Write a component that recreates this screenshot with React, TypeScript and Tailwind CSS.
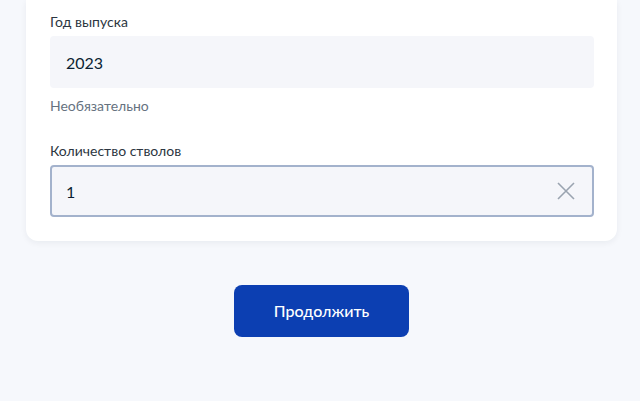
import React, { useState } from 'react';

const font = { fontFamily: 'Lato, "Noto Sans", sans-serif' };

const App: React.FC = () => {
    const [year, setYear] = useState('2023');
    const [barrels, setBarrels] = useState('1');

    return (
        <div className="min-h-[401px] bg-[#f6f8fc] pl-[26px] pr-[23px] pb-16 text-[#0b1f33]" style={font}>
            {/* form card, its top is scrolled away */}
            <div className="rounded-b-xl bg-white pl-6 pr-[23px] pt-3 pb-6 shadow-[0_2px_6px_rgba(11,31,51,0.06)]">
                <label className="block text-sm leading-5 text-[#2c3641]">Год выпуска</label>
                <input
                    value={year}
                    onChange={(e) => setYear(e.target.value)}
                    className="mt-1 block h-[52px] w-full rounded bg-[#f5f6fa] px-4 text-base text-[#0b1f33] outline-none"
                />
                <div className="mt-2 text-sm leading-5 text-[#66727f]">Необязательно</div>

                <label className="mt-[25px] block text-sm leading-5 text-[#2c3641]">Количество стволов</label>
                <div className="relative mt-1">
                    <input
                        value={barrels}
                        onChange={(e) => setBarrels(e.target.value)}
                        className="block h-[52px] w-full rounded border-2 border-[#a3b2cc] bg-[#f5f6fa] px-[14px] text-base text-[#0b1f33] outline-none"
                    />
                    <button
                        onClick={() => setBarrels('')}
                        className="absolute right-[18px] top-1/2 -translate-y-1/2 text-[#9aa4b0]"
                    >
                        <svg width="20" height="20" viewBox="0 0 20 20" fill="none" stroke="currentColor" strokeWidth="1.6">
                            <path d="M2 2 L18 18 M18 2 L2 18" />
                        </svg>
                    </button>
                </div>
            </div>

            <div className="mt-11 flex justify-center">
                <button className="h-[52px] w-[175px] rounded-lg bg-[#0c3fb2] text-base font-medium text-white">
                    Продолжить
                </button>
            </div>
        </div>
    );
};

export default App;
